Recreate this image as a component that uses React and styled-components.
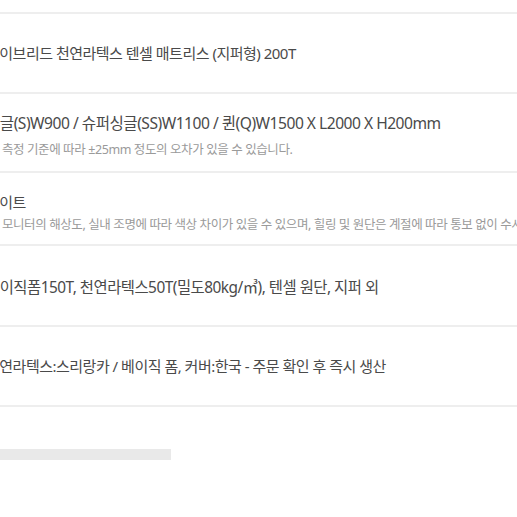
import React from 'react';
import styled, { createGlobalStyle } from 'styled-components';

const Global = createGlobalStyle`
    body {
        margin: 0;
        background: #ffffff;
        font-family: "Noto Sans", "Noto Sans CJK KR", sans-serif;
        overflow: hidden;
    }
`

const Page = styled.div`
    width: 517px;
    height: 517px;
    overflow: hidden;
`

const Table = styled.div`
    display: flex;
    flex-direction: column;
`

const Stub = styled.div`
    height: 12px;
    border-bottom: 2px solid #eeeeee;
`

const Row = styled.div`
    display: flex;
    flex-direction: column;
    justify-content: ${p => (p.$top ? 'flex-start' : 'center')};
    height: ${p => p.$h}px;
    padding-top: ${p => p.$pt || 0}px;
    box-sizing: border-box;
    border-bottom: 2px solid #eeeeee;
    white-space: pre;
`

const Inner = styled.div`
    margin-left: -14px;
    display: flex;
    flex-direction: column;
    gap: ${p => p.$gap || 0}px;
`

const Main = styled.div`
    font-size: ${p => p.$size || 15}px;
    line-height: 18px;
    color: #4a4a4a;
    letter-spacing: -0.5px;
`

const Note = styled.div`
    padding-left: 3px;
    font-size: 12.5px;
    line-height: 16px;
    color: #9a9a9a;
    letter-spacing: -0.4px;
`

const Bar = styled.div`
    margin-top: 42px;
    width: 171px;
    height: 11px;
    background: #e9e9e9;
`

export default function App() {
    return (
        <Page>
            <Global />
            <Table>
                <Stub />
                <Row $h={80}>
                    <Inner>
                        <Main>하이브리드 천연라텍스 텐셀 매트리스 (지퍼형) 200T</Main>
                    </Inner>
                </Row>
                <Row $h={79} $top $pt={20}>
                    <Inner $gap={10}>
                        <Main $size={15.6}>싱글(S)W900 / 슈퍼싱글(SS)W1100 / 퀸(Q)W1500 X L2000 X H200mm</Main>
                        <Note>※ 측정 기준에 따라 ±25mm 정도의 오차가 있을 수 있습니다.</Note>
                    </Inner>
                </Row>
                <Row $h={73} $top $pt={20}>
                    <Inner $gap={6}>
                        <Main>화이트</Main>
                        <Note>※ 모니터의 해상도, 실내 조명에 따라 색상 차이가 있을 수 있으며, 힐링 및 원단은 계절에 따라 통보 없이 수시 변경될 수 있습니다.</Note>
                    </Inner>
                </Row>
                <Row $h={81} $top $pt={33}>
                    <Inner>
                        <Main $size={15.4}>베이직폼150T, 천연라텍스50T(밀도80kg/㎥), 텐셀 원단, 지퍼 외</Main>
                    </Inner>
                </Row>
                <Row $h={80}>
                    <Inner>
                        <Main>천연라텍스:스리랑카 / 베이직 폼, 커버:한국 - 주문 확인 후 즉시 생산</Main>
                    </Inner>
                </Row>
            </Table>
            <Bar />
        </Page>
    )
}
